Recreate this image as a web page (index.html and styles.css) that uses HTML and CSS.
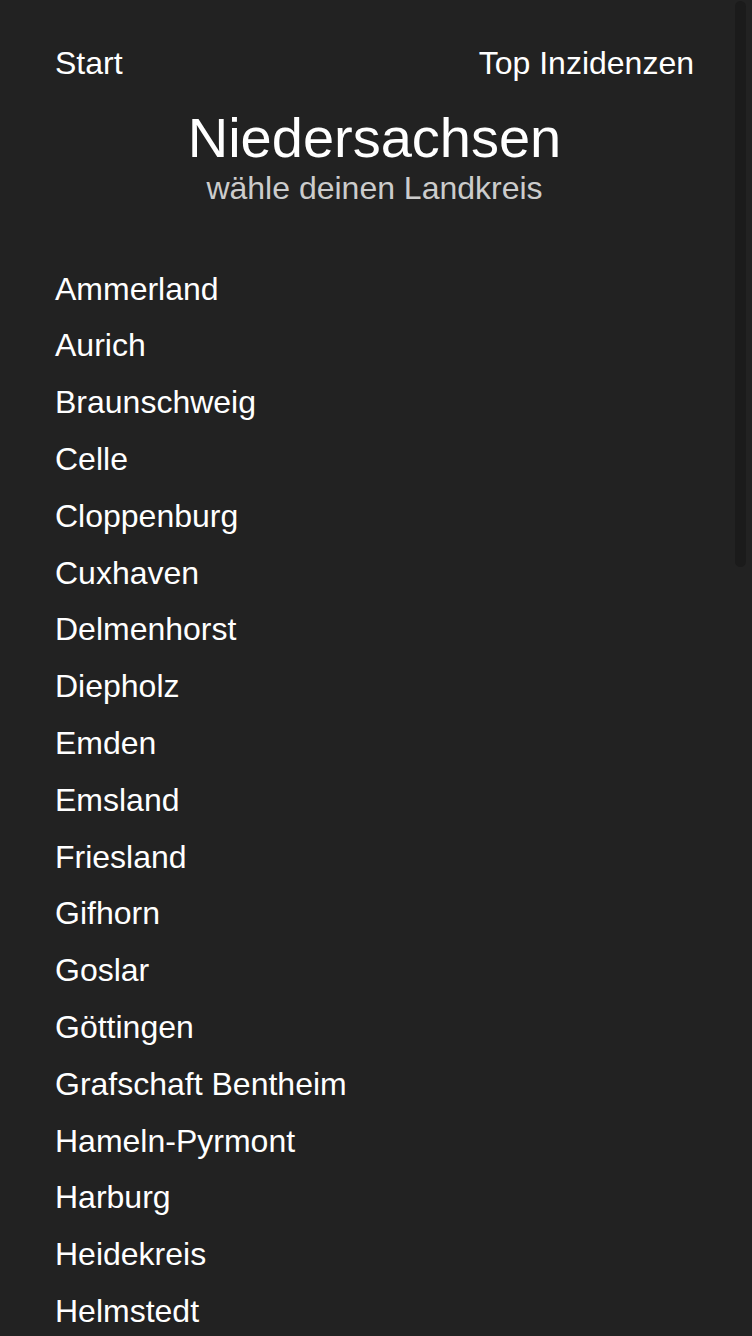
FILE: index.html
```html
<!DOCTYPE html>
<html lang="de">
<head>
<meta charset="utf-8">
<title>Niedersachsen – wähle deinen Landkreis</title>
<link rel="stylesheet" href="styles.css">
</head>
<body>
<div class="scroll-thumb" aria-hidden="true"></div>
<div class="page">
  <nav class="nav">
    <a href="#">Start</a>
    <a href="#">Top Inzidenzen</a>
  </nav>
  <header class="head">
    <h1 class="title">Niedersachsen</h1>
    <div class="sub">wähle deinen Landkreis</div>
  </header>
  <ul class="list">
    <li><a href="#">Ammerland</a></li>
    <li><a href="#">Aurich</a></li>
    <li><a href="#">Braunschweig</a></li>
    <li><a href="#">Celle</a></li>
    <li><a href="#">Cloppenburg</a></li>
    <li><a href="#">Cuxhaven</a></li>
    <li><a href="#">Delmenhorst</a></li>
    <li><a href="#">Diepholz</a></li>
    <li><a href="#">Emden</a></li>
    <li><a href="#">Emsland</a></li>
    <li><a href="#">Friesland</a></li>
    <li><a href="#">Gifhorn</a></li>
    <li><a href="#">Goslar</a></li>
    <li><a href="#">Göttingen</a></li>
    <li><a href="#">Grafschaft Bentheim</a></li>
    <li><a href="#">Hameln-Pyrmont</a></li>
    <li><a href="#">Harburg</a></li>
    <li><a href="#">Heidekreis</a></li>
    <li><a href="#">Helmstedt</a></li>
    <li><a href="#">Hildesheim</a></li>
    <li><a href="#">Holzminden</a></li>
    <li><a href="#">Leer</a></li>
    <li><a href="#">Lüchow-Dannenberg</a></li>
    <li><a href="#">Lüneburg</a></li>
    <li><a href="#">Nienburg (Weser)</a></li>
    <li><a href="#">Northeim</a></li>
    <li><a href="#">Oldenburg</a></li>
    <li><a href="#">Oldenburg (Oldb)</a></li>
    <li><a href="#">Osnabrück</a></li>
    <li><a href="#">Osnabrück (Stadt)</a></li>
    <li><a href="#">Osterholz</a></li>
    <li><a href="#">Peine</a></li>
    <li><a href="#">Region Hannover</a></li>
    <li><a href="#">Rotenburg (Wümme)</a></li>
    <li><a href="#">Salzgitter</a></li>
    <li><a href="#">Schaumburg</a></li>
    <li><a href="#">Stade</a></li>
    <li><a href="#">Uelzen</a></li>
    <li><a href="#">Vechta</a></li>
    <li><a href="#">Verden</a></li>
    <li><a href="#">Wesermarsch</a></li>
    <li><a href="#">Wilhelmshaven</a></li>
    <li><a href="#">Wittmund</a></li>
    <li><a href="#">Wolfenbüttel</a></li>
    <li><a href="#">Wolfsburg</a></li>
  </ul>
</div>
</body>
</html>
```

FILE: styles.css
```css
html {
  background: #222222;
}

body {
  margin: 0;
  background: #222222;
  color: #ffffff;
  font-family: "Liberation Sans", Arial, sans-serif;
}

/* overlay scrollbar thumb, drawn over the page edge */
.scroll-thumb {
  position: fixed;
  top: 1px;
  right: 6px;
  width: 11px;
  height: 566px;
  background: #1b1b1b;
  border-radius: 6px;
  z-index: 10;
}

.page {
  padding: 45px 58px 310px 55px;
}

.nav {
  display: flex;
  justify-content: space-between;
  font-size: 32px;
  line-height: 36.8px;
}

.nav a {
  color: #ffffff;
  text-decoration: none;
}

.head {
  margin-top: 23px;
  text-align: center;
}

.title {
  margin: 0;
  font-size: 56px;
  line-height: 65px;
  font-weight: normal;
}

.sub {
  font-size: 32px;
  line-height: 36.8px;
  color: #cccccc;
}

.list {
  list-style: none;
  margin: 54px 0 0;
  padding: 0;
  font-size: 32px;
  line-height: 36.8px;
}

.list a {
  display: block;
  padding: 10px 0;
  color: #ffffff;
  text-decoration: none;
}
```
